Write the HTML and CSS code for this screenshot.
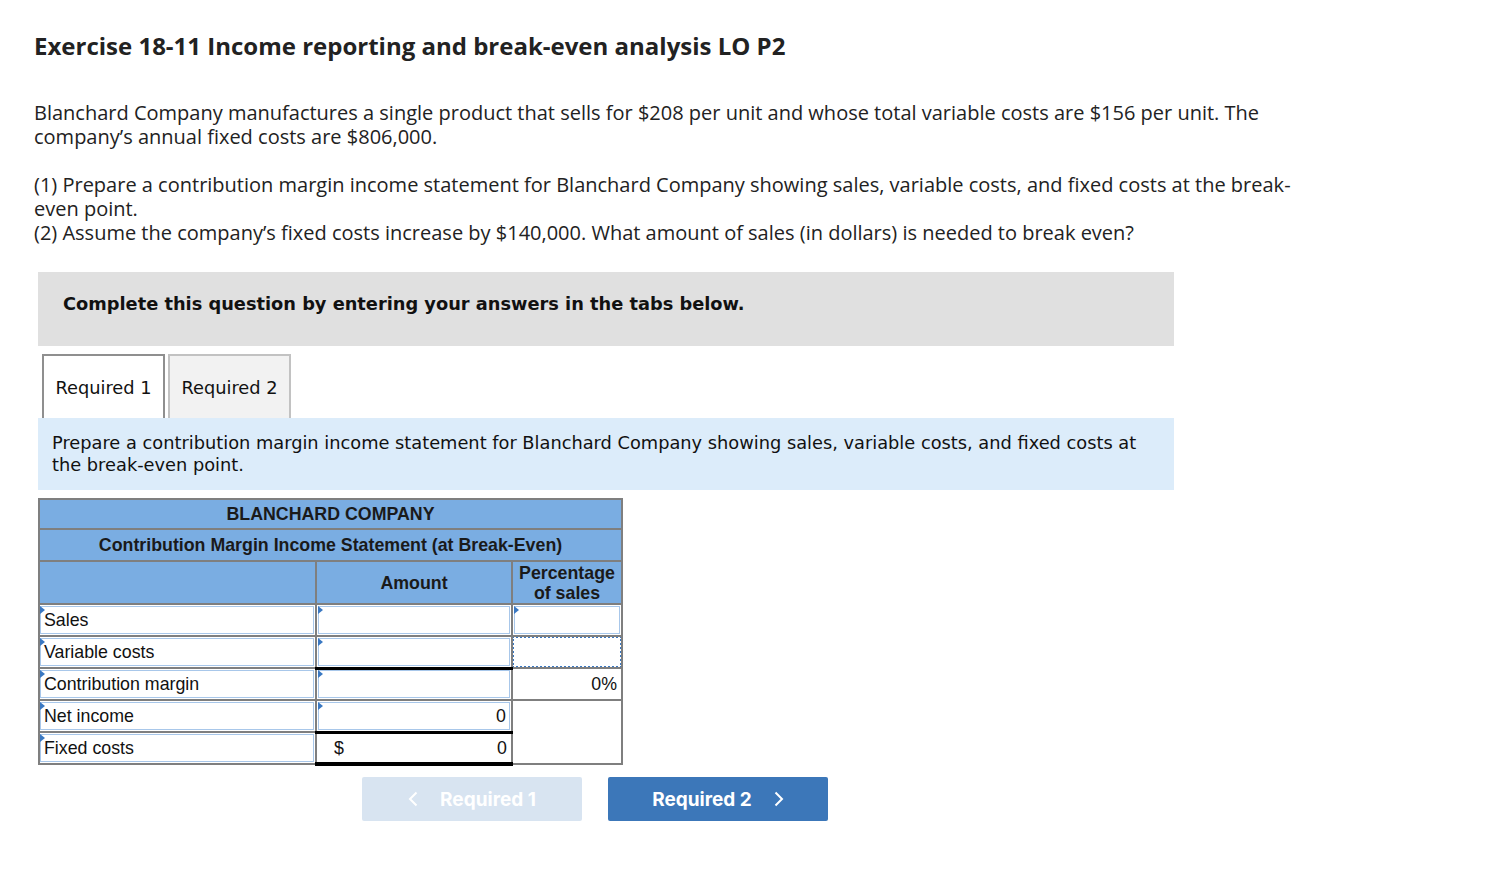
FILE: index.html
```html
<!DOCTYPE html>
<html>
<head>
<meta charset="utf-8">
<link rel="stylesheet" href="styles.css">
</head>
<body>
<div class="page">
  <h1 class="title">Exercise 18-11 Income reporting and break-even analysis LO P2</h1>
  <p class="para">Blanchard Company manufactures a single product that sells for $208 per unit and whose total variable costs are $156 per unit. The company’s annual fixed costs are $806,000.</p>
  <p class="para">(1) Prepare a contribution margin income statement for Blanchard Company showing sales, variable costs, and fixed costs at the break-even point.<br>(2) Assume the company’s fixed costs increase by $140,000. What amount of sales (in dollars) is needed to break even?</p>

  <div class="question">
    <div class="notice">Complete this question by entering your answers in the tabs below.</div>
    <div class="tabs">
      <div class="tab active">Required 1</div>
      <div class="tab">Required 2</div>
    </div>
    <div class="instruction">Prepare a contribution margin income statement for Blanchard Company showing sales, variable costs, and fixed costs at the break-even point.</div>

    <table class="sheet">
      <colgroup>
        <col class="c-label">
        <col class="c-amt">
        <col class="c-pct">
      </colgroup>
      <tr class="h1"><th colspan="3">BLANCHARD COMPANY</th></tr>
      <tr class="h2"><th colspan="3">Contribution Margin Income Statement (at Break-Even)</th></tr>
      <tr class="h3"><th></th><th>Amount</th><th>Percentage<br>of sales</th></tr>
      <tr>
        <td class="lbl"><div class="inp tri">Sales</div></td>
        <td class="amt"><div class="inp tri"></div></td>
        <td class="pct"><div class="inp tri"></div></td>
      </tr>
      <tr>
        <td class="lbl"><div class="inp tri">Variable costs</div></td>
        <td class="amt under"><div class="inp tri"></div></td>
        <td class="pct"><div class="dotted"></div></td>
      </tr>
      <tr>
        <td class="lbl"><div class="inp tri">Contribution margin</div></td>
        <td class="amt"><div class="inp tri"></div></td>
        <td class="pct val">0%</td>
      </tr>
      <tr>
        <td class="lbl"><div class="inp tri">Net income</div></td>
        <td class="amt"><div class="inp tri num">0</div></td>
        <td class="pct" rowspan="2"></td>
      </tr>
      <tr>
        <td class="lbl"><div class="inp tri">Fixed costs</div></td>
        <td class="amt total"><div class="money"><span>$</span><span>0</span></div></td>
      </tr>
    </table>

    <div class="nav">
      <button class="btn prev"><svg class="chev" viewBox="0 0 10 16" width="10" height="16"><path d="M8.5 1.5 L2 8 L8.5 14.5" fill="none" stroke="currentColor" stroke-width="2"/></svg><span>Required 1</span></button>
      <button class="btn next"><span>Required 2</span><svg class="chev" viewBox="0 0 10 16" width="10" height="16"><path d="M1.5 1.5 L8 8 L1.5 14.5" fill="none" stroke="currentColor" stroke-width="2"/></svg></button>
    </div>
  </div>
</div>
</body>
</html>
```

FILE: styles.css
```css
* { box-sizing: border-box; }
body { margin: 0; background: #fff; color: #222; }
.page { padding: 31px 34px 40px 34px; font-family: "Open Sans", Arial, sans-serif; }
.title { margin: 0; font-size: 24px; line-height: 30px; font-weight: 700; color: #222; }
.para { margin: 40px 0 0 0; font-size: 20px; line-height: 24px; color: #222; max-width: 1264px; }
.para + .para { margin-top: 24px; }
.question { margin: 27px 0 0 4px; width: 1136px; }
.notice { background: #e0e0e0; height: 74px; padding: 20px 25px 0 25px; font-family: "DejaVu Sans", Verdana, sans-serif; font-weight: 700; font-size: 17.8px; line-height: 24px; color: #111; }
.tabs { display: flex; gap: 3px; margin-top: 8px; padding-left: 4px; }
.tab { width: 123px; height: 64px; display: flex; align-items: center; justify-content: center; font-family: "DejaVu Sans", Verdana, sans-serif; font-size: 17.8px; color: #111; border: 2px solid #c2c2c2; border-bottom: none; background: #f2f2f2; }
.tab.active { background: #fff; border-color: #8f8f8f; }
.instruction { background: #dcecfa; height: 72px; padding: 14px 14px 0 14px; font-family: "DejaVu Sans", Verdana, sans-serif; font-size: 17.8px; line-height: 22px; color: #111; }
.sheet { margin-top: 8px; border-collapse: collapse; width: 583px; font-family: "Liberation Sans", Arial, sans-serif; font-size: 17.8px; color: #111; table-layout: fixed; }
.c-label { width: 277px; } .c-amt { width: 196px; } .c-pct { width: 110px; }
.sheet th, .sheet td { border: 2px solid #7f7f7f; padding: 0; }
.sheet th { background: #7aade2; font-weight: 700; color: #1a1a1a; }
.h1 th { height: 30px; }
.h2 th { height: 32px; }
.h3 th { height: 43px; line-height: 20px; }
.sheet td { height: 32px; background: #fff; }
.inp { position: relative; height: 28px; margin: 0 1px; border: 1px solid #a8c7ea; padding: 0 3px; line-height: 26px; white-space: nowrap; }
.tri::before { content: ""; position: absolute; left: -1px; top: -1px; border-style: solid; border-width: 4px 0 4px 5px; border-color: transparent transparent transparent #3a78c2; }
.num { text-align: right; }
.lbl .inp { margin-left: 0; }
.under { border-bottom: 3px solid #000 !important; }
.total { border-top: 3px solid #000 !important; border-bottom: 4px solid #000 !important; }
.money { display: flex; justify-content: space-between; padding: 0 4px 0 17px; line-height: 26px; }
.dotted { height: 32px; margin: -1px; border: 2px dotted #3a78c2; }
.val { text-align: right; padding-right: 4px !important; }
.nav { display: flex; gap: 26px; margin-top: 11px; padding-left: 324px; }
.btn { width: 220px; height: 44px; border: none; border-radius: 2px; display: flex; align-items: center; justify-content: center; gap: 22px; font-family: Inter, "Open Sans", sans-serif; font-weight: 700; font-size: 19px; color: #fff; }
.prev { background: #d8e4f1; }
.next { background: #3c77b9; }
.chev { display: block; }
```
